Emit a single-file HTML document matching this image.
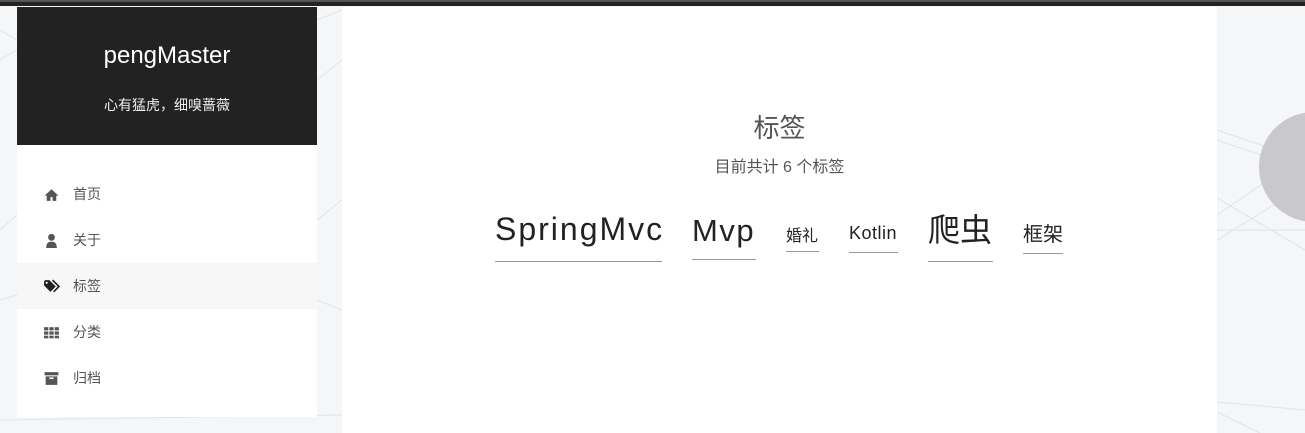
<!DOCTYPE html>
<html><head><meta charset="utf-8"><style>
*{margin:0;padding:0;box-sizing:border-box}
body{width:1305px;height:433px;overflow:hidden;background:#f5f6f8;position:relative;font-family:"Liberation Sans","Noto Sans CJK SC",sans-serif}
.top{position:absolute;left:0;top:0;width:1305px;height:6px;background:#222;border-top:2px solid #555}
.side{position:absolute;left:17px;top:7px;width:300px;height:410px;background:#fff}
.hd{height:138px;background:#222;color:#fff;text-align:center}
.hd h1{font-weight:normal;font-size:24px;padding-top:34px;line-height:30px}
.hd p{font-size:14px;margin-top:24px;color:#eee}
.menu{margin-top:26px}
.mi{height:46px;display:flex;align-items:center;padding-left:26px;font-size:14px;color:#555}
.mi.on{background:#f7f7f7}
.mi svg{width:17px;height:17px;margin-right:13px}
.main{position:absolute;left:342px;top:7px;width:875px;height:426px;background:#fff}
.t{position:absolute;white-space:nowrap;color:#222}
.u{position:absolute;height:1px;background:#999}
.circ{position:absolute;left:1259px;top:112px;width:110px;height:110px;border-radius:50%;background:#c9c9cb}
</style></head><body>
<svg style="position:absolute;left:0;top:0" width="1305" height="433"><g stroke="#e2e3e6" stroke-width="1" fill="none">
<line x1="0" y1="30" x2="17" y2="40"/><line x1="0" y1="60" x2="17" y2="50"/><line x1="317" y1="20" x2="342" y2="10"/><line x1="317" y1="80" x2="342" y2="60"/><line x1="317" y1="220" x2="342" y2="200"/><line x1="317" y1="300" x2="342" y2="310"/><line x1="0" y1="230" x2="17" y2="215"/><line x1="0" y1="300" x2="17" y2="295"/><line x1="0" y1="420" x2="342" y2="415"/>
<line x1="1217" y1="130" x2="1305" y2="160"/><line x1="1217" y1="140" x2="1305" y2="170"/><line x1="1217" y1="215" x2="1290" y2="165"/><line x1="1217" y1="240" x2="1290" y2="195"/><line x1="1217" y1="198" x2="1305" y2="250"/><line x1="1217" y1="230" x2="1305" y2="230"/><line x1="1217" y1="402" x2="1305" y2="410"/><line x1="1217" y1="412" x2="1260" y2="433"/></g></svg>
<div class="circ"></div>
<div class="top"></div>
<div class="side">
<div class="hd"><h1>pengMaster</h1><p>心有猛虎，细嗅蔷薇</p></div>
<div class="menu">
<div class="mi"><svg viewBox="0 0 16 16"><path d="M8 3L1.5 9h2v5h3.5v-3.5h2V14h3.5V9h2z" fill="#555"/></svg>首页</div>
<div class="mi"><svg viewBox="0 0 16 16"><circle cx="8" cy="5" r="3.2" fill="#555"/><path d="M3 15c0-4.5 2-6 5-6s5 1.5 5 6z" fill="#555"/></svg>关于</div>
<div class="mi on"><svg viewBox="0 0 16 16"><path d="M1 3v4l6 6 5-5-6-6H2z" fill="#222"/><path d="M9 2l6 6-5 5" stroke="#222" stroke-width="1.5" fill="none"/><circle cx="3.5" cy="4.5" r="1" fill="#fff"/></svg>标签</div>
<div class="mi"><svg viewBox="0 0 16 16" fill="#555"><rect x="1" y="3" width="4" height="3"/><rect x="6" y="3" width="4" height="3"/><rect x="11" y="3" width="4" height="3"/><rect x="1" y="7" width="4" height="3"/><rect x="6" y="7" width="4" height="3"/><rect x="11" y="7" width="4" height="3"/><rect x="1" y="11" width="4" height="2.5"/><rect x="6" y="11" width="4" height="2.5"/><rect x="11" y="11" width="4" height="2.5"/></svg>分类</div>
<div class="mi"><svg viewBox="0 0 16 16" fill="#555"><rect x="1.5" y="2" width="13" height="3"/><rect x="2.5" y="6" width="11" height="8"/><rect x="6" y="7" width="4" height="1.5" fill="#fff"/></svg>归档</div>
</div></div>
<div class="main"></div>
<div class="t" style="left:0;width:1559px;top:108px;text-align:center;font-size:26px;color:#555">标签</div>
<div class="t" style="left:0;width:1559px;top:153px;text-align:center;font-size:16px;color:#555">目前共计 6 个标签</div>
<div class="t" style="left:495px;top:211px;font-size:32px;letter-spacing:2px">SpringMvc</div><div class="u" style="left:495px;top:261px;width:167px"></div>
<div class="t" style="left:692px;top:213px;font-size:31px;letter-spacing:1.5px">Mvp</div><div class="u" style="left:692px;top:259px;width:64px"></div>
<div class="t" style="left:786px;top:222px;font-size:16px">婚礼</div><div class="u" style="left:786px;top:251px;width:33px"></div>
<div class="t" style="left:849px;top:223px;font-size:18px;letter-spacing:0.5px">Kotlin</div><div class="u" style="left:849px;top:252px;width:49px"></div>
<div class="t" style="left:928px;top:205px;font-size:32px">爬虫</div><div class="u" style="left:928px;top:261px;width:65px"></div>
<div class="t" style="left:1023px;top:218px;font-size:20px">框架</div><div class="u" style="left:1023px;top:253px;width:40px"></div>
</body></html>
